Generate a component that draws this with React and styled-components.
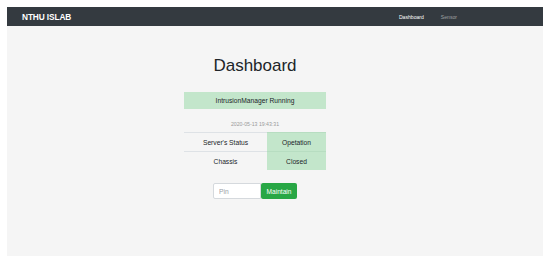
import React from "react";
import styled, { createGlobalStyle } from "styled-components";

const Global = createGlobalStyle`
  html, body { margin: 0; padding: 0; background: #ffffff; }
  body { padding: 7px 7px 8px 7px; font-family: "Liberation Sans", Arial, sans-serif; color: #212529; }
  * { box-sizing: border-box; }
`;

const Frame = styled.div`
  display: flex;
  flex-direction: column;
  height: 249px;
  background: #f5f5f5;
`;

const NavBar = styled.nav`
  display: flex;
  align-items: center;
  height: 19px;
  background: #343a40;
  padding: 0 86px 0 15px;
`;

const Brand = styled.div`
  color: #ffffff;
  font-size: 8.3px;
  font-weight: 700;
  letter-spacing: -0.1px;
`;

const NavLinks = styled.div`
  display: flex;
  gap: 17px;
  margin-left: auto;
`;

const NavLink = styled.span`
  font-size: 5.1px;
  color: ${(p) => (p.$active ? "#ffffff" : "rgba(255,255,255,0.5)")};
`;

const Main = styled.main`
  flex: 1;
  display: flex;
  flex-direction: column;
  align-items: center;
  padding: 30px 40px 0 0;
`;

const Title = styled.h1`
  margin: 0;
  font-size: 17px;
  line-height: 20px;
  font-weight: 400;
`;

const Status = styled.div`
  margin-top: 16px;
  width: 142px;
  height: 17px;
  display: flex;
  align-items: center;
  justify-content: center;
  background: #c3e6cb;
  font-size: 6.7px;
`;

const Stamp = styled.div`
  margin-top: 11px;
  font-size: 5.2px;
  line-height: 8px;
  color: #9a9a9a;
`;

const Table = styled.div`
  margin-top: 4px;
  width: 142px;
  display: grid;
  grid-template-columns: 83px 59px;
`;

const Cell = styled.div`
  height: 19px;
  border-top: 1px solid #dee2e6;
  display: flex;
  align-items: center;
  justify-content: center;
  font-size: 6.7px;
  background: ${(p) => (p.$ok ? "#c3e6cb" : "transparent")};
  border-top-color: ${(p) => (p.$ok ? "#b7ddc1" : "#dee2e6")};
`;

const Form = styled.div`
  margin-top: 13px;
  display: flex;
`;

const Input = styled.input`
  width: 48px;
  height: 16px;
  border: 1px solid #d5d9dd;
  border-radius: 2px 0 0 2px;
  background: #ffffff;
  padding: 0 5px;
  font-family: "Liberation Sans", Arial, sans-serif;
  font-size: 6.7px;
  outline: none;
  &::placeholder { color: #9aa0a6; }
`;

const Button = styled.button`
  width: 36px;
  height: 16px;
  border: none;
  border-radius: 2px;
  background: #28a745;
  color: #ffffff;
  font-family: "Liberation Sans", Arial, sans-serif;
  font-size: 6.6px;
  padding: 0;
`;

export default function App() {
  return (
    <>
      <Global />
      <Frame>
        <NavBar>
          <Brand>NTHU ISLAB</Brand>
          <NavLinks>
            <NavLink $active>Dashboard</NavLink>
            <NavLink>Sensor</NavLink>
          </NavLinks>
        </NavBar>
        <Main>
          <Title>Dashboard</Title>
          <Status>IntrusionManager Running</Status>
          <Stamp>2020-05-13 19:43:31</Stamp>
          <Table>
            <Cell>Server's Status</Cell>
            <Cell $ok>Opetation</Cell>
            <Cell>Chassis</Cell>
            <Cell $ok>Closed</Cell>
          </Table>
          <Form>
            <Input placeholder="Pin" />
            <Button>Maintain</Button>
          </Form>
        </Main>
      </Frame>
    </>
  );
}
